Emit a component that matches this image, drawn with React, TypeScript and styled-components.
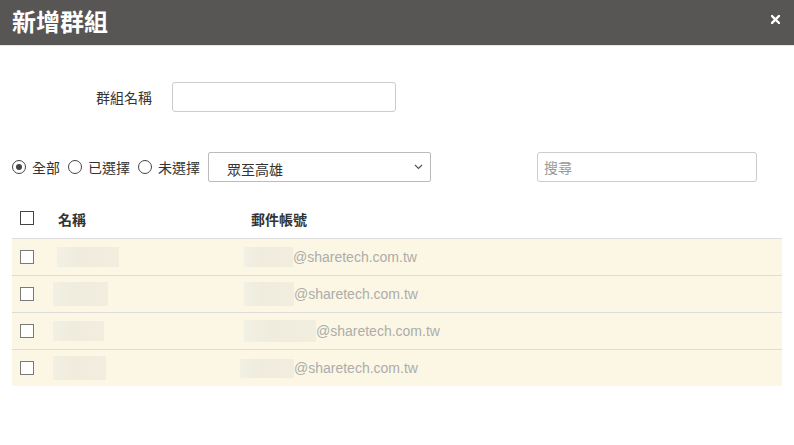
import React from 'react';
import styled, { createGlobalStyle } from 'styled-components';

const GlobalStyle = createGlobalStyle`
  html, body {
    margin: 0;
    padding: 0;
    background: #fff;
    font-family: 'Liberation Sans', 'Noto Sans CJK TC', Arial, sans-serif;
    color: #333;
  }
`;

const rows = [
  { nameW: 62, nameH: 20, nameX: -1, mailW: 49, mailH: 20, mailX: -7 },
  { nameW: 55, nameH: 24, nameX: -5, mailW: 50, mailH: 24, mailX: -7 },
  { nameW: 51, nameH: 20, nameX: -5, mailW: 72, mailH: 22, mailX: -7 },
  { nameW: 53, nameH: 24, nameX: -5, mailW: 54, mailH: 19, mailX: -11 },
];

function App() {
  return (
    <Dialog>
      <GlobalStyle />
      <Header>
        <Title>新增群組</Title>
        <CloseBtn aria-label='close'>
          <svg width='9' height='9' viewBox='0 0 9 9'>
            <path d='M1 1 L8 8 M8 1 L1 8' stroke='#fff' strokeWidth='2.4' strokeLinecap='square' />
          </svg>
        </CloseBtn>
      </Header>
      <Body>
        <FormRow>
          <Label>群組名稱</Label>
          <TextInput />
        </FormRow>
        <FilterRow>
          <RadioItem>
            <Radio $checked />
            全部
          </RadioItem>
          <RadioItem>
            <Radio />
            已選擇
          </RadioItem>
          <RadioItem>
            <Radio />
            未選擇
          </RadioItem>
          <Select>
            <span>眾至高雄</span>
            <svg width='9' height='6' viewBox='0 0 9 6'>
              <path d='M1 1 L4.5 4.5 L8 1' fill='none' stroke='#555' strokeWidth='1.2' />
            </svg>
          </Select>
          <Search placeholder='搜尋' />
        </FilterRow>
        <Table>
          <HeadRow>
            <CheckCell>
              <Checkbox $dark />
            </CheckCell>
            <NameCell>
              <HeadText>名稱</HeadText>
            </NameCell>
            <MailCell>
              <HeadText>郵件帳號</HeadText>
            </MailCell>
          </HeadRow>
          {rows.map((r, i) => (
            <Row key={`row_${i}`}>
              <CheckCell>
                <Checkbox />
              </CheckCell>
              <NameCell>
                <Blur $w={r.nameW} $h={r.nameH} $x={r.nameX} />
              </NameCell>
              <MailCell>
                <Blur $w={r.mailW} $h={r.mailH} $x={r.mailX} />
                <Mail>@sharetech.com.tw</Mail>
              </MailCell>
            </Row>
          ))}
        </Table>
      </Body>
    </Dialog>
  );
}

export default App;

const Dialog = styled.div`
  width: 794px;
  height: 445px;
  background: #fff;
`;

const Header = styled.div`
  height: 46px;
  background: #575655;
  border-bottom: 1px solid #e6e6e6;
  display: flex;
  align-items: center;
  justify-content: space-between;
  padding: 0 14px 0 12px;
  box-sizing: border-box;
`;

const Title = styled.h1`
  margin: 0;
  font-family: 'Noto Sans CJK TC', sans-serif;
  font-size: 24px;
  font-weight: 700;
  color: #fff;
  line-height: 1;
  margin-top: -3px;
`;

const CloseBtn = styled.button`
  border: 0;
  padding: 0;
  background: none;
  display: flex;
  margin-top: -7px;
  cursor: pointer;
`;

const Body = styled.div`
  padding: 36px 12px 0 12px;
`;

const FormRow = styled.div`
  display: flex;
  align-items: center;
  gap: 20px;
  padding-left: 84px;
`;

const Label = styled.label`
  font-family: 'Noto Sans CJK TC', sans-serif;
  font-size: 14px;
  color: #333;
`;

const TextInput = styled.input`
  width: 224px;
  height: 30px;
  box-sizing: border-box;
  border: 1px solid #ccc;
  border-radius: 3px;
  outline: none;
`;

const FilterRow = styled.div`
  display: flex;
  align-items: center;
  margin-top: 40px;
`;

const RadioItem = styled.label`
  display: flex;
  align-items: center;
  gap: 6px;
  margin-right: 8px;
  font-family: 'Noto Sans CJK TC', sans-serif;
  font-size: 14px;
  color: #333;
`;

const Radio = styled.span<{ $checked?: boolean }>`
  width: 14px;
  height: 14px;
  box-sizing: border-box;
  border: 1.5px solid #444;
  border-radius: 50%;
  display: flex;
  align-items: center;
  justify-content: center;
  &::after {
    content: '';
    width: 6px;
    height: 6px;
    border-radius: 50%;
    background: #444;
    display: ${p => (p.$checked ? 'block' : 'none')};
  }
`;

const Select = styled.div`
  width: 223px;
  height: 30px;
  box-sizing: border-box;
  border: 1px solid #bbb;
  border-radius: 2px;
  display: flex;
  align-items: center;
  justify-content: space-between;
  padding: 0 7px 0 18px;
  font-family: 'Noto Sans CJK TC', sans-serif;
  font-size: 14px;
  color: #333;
  span {
    margin-top: 4px;
  }
`;

const Search = styled.input`
  margin-left: 106px;
  width: 220px;
  height: 30px;
  box-sizing: border-box;
  border: 1px solid #ccc;
  border-radius: 3px;
  padding: 0 6px;
  font-family: 'Noto Sans CJK TC', sans-serif;
  font-size: 14px;
  outline: none;
  &::placeholder {
    color: #999;
  }
`;

const Table = styled.div`
  margin-top: 18px;
  width: 770px;
`;

const HeadRow = styled.div`
  display: grid;
  grid-template-columns: 46px 193px 1fr;
  align-items: center;
  height: 38px;
  border-bottom: 1px solid #ddd;
`;

const Row = styled.div`
  display: grid;
  grid-template-columns: 46px 193px 1fr;
  align-items: center;
  height: 36px;
  background: #fcf7e4;
  border-bottom: 1px solid #dcdcdc;
  &:last-child {
    border-bottom: 0;
  }
`;

const CheckCell = styled.div`
  padding-left: 8px;
  display: flex;
`;

const NameCell = styled.div`
  display: flex;
  align-items: center;
`;

const MailCell = styled.div`
  display: flex;
  align-items: center;
`;

const HeadText = styled.span`
  font-family: 'Noto Sans CJK TC', sans-serif;
  font-size: 14px;
  font-weight: 700;
  color: #333;
`;

const Checkbox = styled.span<{ $dark?: boolean }>`
  width: 14px;
  height: 14px;
  box-sizing: border-box;
  border: 1px solid ${p => (p.$dark ? '#444' : '#7a7a7a')};
  background: #fff;
  margin-top: ${p => (p.$dark ? '-2px' : '0')};
`;

const Blur = styled.span<{ $w: number; $h: number; $x: number }>`
  display: block;
  width: ${p => p.$w}px;
  height: ${p => p.$h}px;
  margin-left: ${p => p.$x}px;
  background: linear-gradient(90deg, #f2f0e4, #efecdd 40%, #f1eee0);
`;

const Mail = styled.span`
  font-size: 14px;
  color: #acacac;
`;
